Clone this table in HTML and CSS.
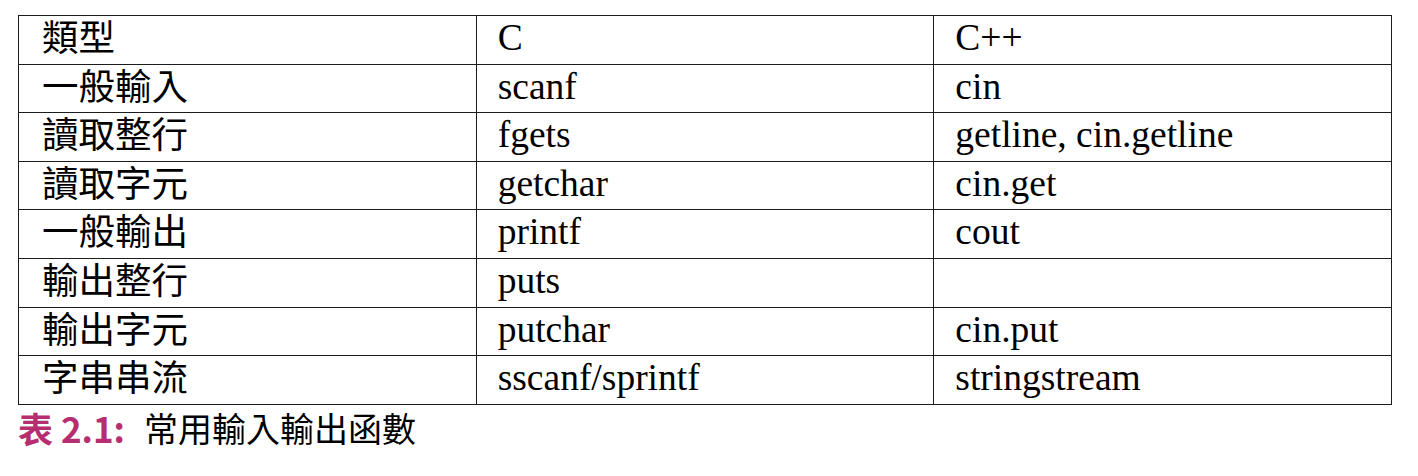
FILE: index.html
```html
<!DOCTYPE html>
<html lang="zh-Hant">
<head>
<meta charset="utf-8">
<link rel="stylesheet" href="styles.css">
</head>
<body>
<div class="page">
  <table class="io-table">
    <tr><td class="cjk">類型</td><td>C</td><td>C++</td></tr>
    <tr><td class="cjk">一般輸入</td><td>scanf</td><td>cin</td></tr>
    <tr><td class="cjk">讀取整行</td><td>fgets</td><td>getline, cin.getline</td></tr>
    <tr><td class="cjk">讀取字元</td><td>getchar</td><td>cin.get</td></tr>
    <tr><td class="cjk">一般輸出</td><td>printf</td><td>cout</td></tr>
    <tr><td class="cjk">輸出整行</td><td>puts</td><td></td></tr>
    <tr><td class="cjk">輸出字元</td><td>putchar</td><td>cin.put</td></tr>
    <tr><td class="cjk">字串串流</td><td>sscanf/sprintf</td><td>stringstream</td></tr>
  </table>
  <div class="caption"><span class="label">表 2.1:</span><span class="text">常用輸入輸出函數</span></div>
</div>
</body>
</html>
```
FILE: styles.css
```css
html, body {
  margin: 0;
  padding: 0;
  background: #ffffff;
}
.page {
  padding: 15px 0 0 18px;
}
.io-table {
  border-collapse: collapse;
  width: 1374px;
  table-layout: fixed;
}
.io-table td {
  border: 1px solid #1c1c1c;
  height: 48.6px;
  padding: 2px 0 0 21px;
  vertical-align: top;
  font-family: "Liberation Serif", "Noto Sans CJK TC", serif;
  font-size: 37.5px;
  line-height: 40px;
  color: #000;
  box-sizing: border-box;
}
.io-table td.cjk {
  font-family: "Noto Sans CJK TC", sans-serif;
  font-size: 36.5px;
  padding: 0 0 0 23px;
  line-height: 40px;
}
.caption {
  font-family: "Noto Sans CJK TC", sans-serif;
  font-size: 34px;
  line-height: 40px;
  padding-top: 3px;
  color: #000;
  display: flex;
  gap: 19px;
}
.caption .label {
  color: #b52e6f;
  font-weight: bold;
  font-size: 35px;
}
```
